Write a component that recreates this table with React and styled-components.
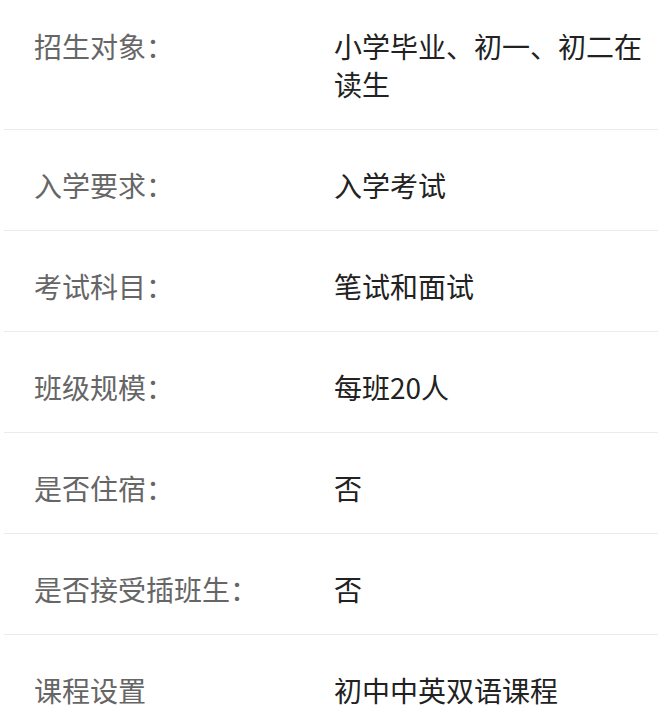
import React from "react";
import styled, { createGlobalStyle } from "styled-components";

const GlobalStyle = createGlobalStyle`
  html, body {
    margin: 0;
    padding: 0;
    background: #ffffff;
  }
  body {
    font-family: "Noto Sans CJK SC", "Noto Sans", sans-serif;
    overflow: hidden;
  }
`;

const Page = styled.div`
  width: 666px;
  height: 721px;
  overflow: hidden;
  box-sizing: border-box;
  padding: 0 8px 0 4px;
`;

const List = styled.dl`
  margin: -9px 0 0;
  padding: 0;
  display: flex;
  flex-direction: column;
`;

const Row = styled.div`
  display: grid;
  grid-template-columns: 300px 1fr;
  padding: 36px 16px 26px 30px;
  border-bottom: 1px solid #ebebeb;
  font-size: 28px;
  line-height: 38px;
`;

const Label = styled.dt`
  margin: 0;
  color: #666666;
`;

const Value = styled.dd`
  margin: 0;
  color: #222222;
`;

const rows = [
  ["招生对象：", "小学毕业、初一、初二在读生"],
  ["入学要求：", "入学考试"],
  ["考试科目：", "笔试和面试"],
  ["班级规模：", "每班20人"],
  ["是否住宿：", "否"],
  ["是否接受插班生：", "否"],
  ["课程设置", "初中中英双语课程"],
];

export default function App() {
  return (
    <>
      <GlobalStyle />
      <Page>
        <List>
          {rows.map(([label, value]) => (
            <Row key={label}>
              <Label>{label}</Label>
              <Value>{value}</Value>
            </Row>
          ))}
        </List>
      </Page>
    </>
  );
}
